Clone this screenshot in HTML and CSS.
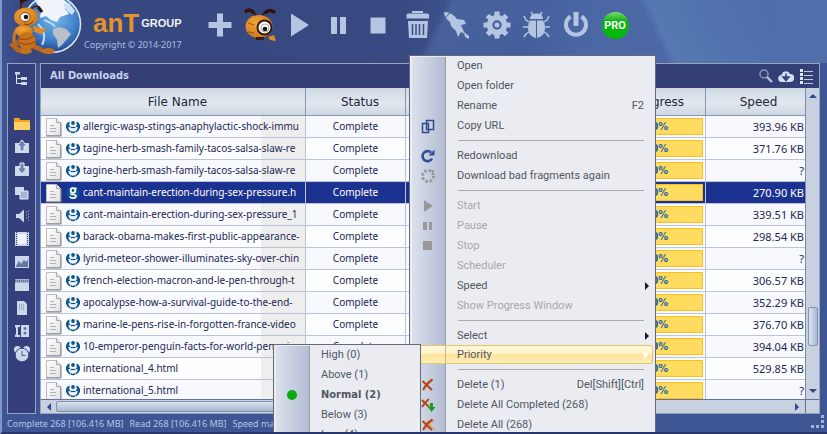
FILE: index.html
```html
<!DOCTYPE html>
<html lang="en">
<head>
<meta charset="utf-8">
<title>Ant Download Manager</title>
<link rel="stylesheet" href="styles.css">
</head>
<body>
<svg class="defs" aria-hidden="true">
  <defs>
    <linearGradient id="paper" x1="0" y1="0" x2="1" y2="1"><stop offset="0" stop-color="#fff"/><stop offset="1" stop-color="#e2e2e2"/></linearGradient>
    <radialGradient id="sea" cx=".55" cy=".4" r=".65"><stop offset="0" stop-color="#78b8ec"/><stop offset=".6" stop-color="#3f7fc8"/><stop offset="1" stop-color="#163a80"/></radialGradient>
    <radialGradient id="amber" cx=".4" cy=".35" r=".7"><stop offset="0" stop-color="#f4a535"/><stop offset="1" stop-color="#c9761a"/></radialGradient>
    <symbol id="doc" viewBox="0 0 17 20">
      <path d="M1.5 1.5H11.5L15.5 5.5V18.5H1.5Z" fill="url(#paper)" stroke="#bcbcbc"/>
      <path d="M1 19H16V6" fill="none" stroke="#828282"/>
      <path d="M11.5 1.5V5.5H15.5" fill="#eee" stroke="#a8a8a8"/>
      <path d="M5 8.5H9M5 11.5H11M5 14.5H11" stroke="#b4b4b4"/>
    </symbol>
    <symbol id="site" viewBox="0 0 14 14">
      <path d="M3.500 1.500V4L2.500 5.500H4V7H2.500V8.500L4 11V12.500L1.500 10.500 0 8V5L1.500 2.500ZM10.500 1.500V4L11.500 5.500H10V7H11.500V8.500L10 11V12.500L12.500 10.500 14 8V5L12.500 2.500Z" fill="#0c5590"/>
      <circle cx="7" cy="3" r="1.900" fill="#0c5590"/>
      <path d="M4.500 7.500H9.500" stroke="#0c5590" stroke-width="1.300"/>
      <path d="M4.500 10.500Q7 13 9.500 10.500V12.500Q7 14 4.500 12.500Z" fill="#0c5590"/>
    </symbol>
    <symbol id="site-on" viewBox="0 0 14 14">
      <circle cx="7" cy="7" r="6.800" fill="#0c5590"/>
      <circle cx="7" cy="4.500" r="2.300" fill="none" stroke="#fff" stroke-width="1.800"/>
      <path d="M9 2.800 10.500 2M5 7.500Q4.500 8.500 7 8.500 10 8.500 10 10.300 9.500 12.200 7 12.200 4 12 4.200 10.300" fill="none" stroke="#fff" stroke-width="1.700"/>
    </symbol>
    <symbol id="cross" viewBox="0 0 16 16"><path d="M2.500 4 12 13M12.500 2.500Q7 6 3 13" fill="none" stroke="#b5481c" stroke-width="2.200"/></symbol>
  </defs>
</svg>

<header class="top">
  <svg class="logo" viewBox="8 0 76 57" role="img" aria-label="Ant and globe">
    <circle cx="52" cy="24" r="28.500" fill="url(#sea)" stroke="#dce8f4" stroke-width="1.500"/>
    <path d="M35 1 46-3 64 0 70 5 65 9 69 14 60 17 57 22 51 20 46 16 40 18 41 9Z" fill="#eef4fa"/>
    <path d="M63 4 69 3 75 11 72 15 67 11Z" fill="#cfe0f0"/>
    <path d="M53 29 59 27 66 29 71 34 67 39 62 45 58 48 57 40 53 34Z" fill="#b9c0c8"/>
    <path d="M38 24Q48 34 42 45M44 20Q54 24 55 27" fill="none" stroke="#b5d9f5" stroke-width="2"/>
    <path d="M21 9Q19 2 27-1M31 9Q38 2 42 12" fill="none" stroke="#48200f" stroke-width="1.800"/>
    <path d="M20 2 27-1M38 7 42 12" stroke="#30140c" stroke-width="3"/>
    <path d="M33 27 43 31 45 28M34 30 42 33" fill="none" stroke="#dc8928" stroke-width="3"/>
    <path d="M18 42 13 45 18 50 26 52M31 45 42 50" fill="none" stroke="#b86520" stroke-width="5"/>
    <ellipse cx="48" cy="51" rx="7" ry="3" fill="#c27120"/>
    <ellipse cx="26" cy="51" rx="6" ry="3" fill="#c27120"/>
    <path d="M20 27Q13 30 14 42" fill="none" stroke="#c87820" stroke-width="3"/>
    <ellipse cx="24" cy="31" rx="9" ry="6" fill="url(#amber)"/>
    <ellipse cx="27" cy="41" rx="9" ry="9" fill="#c6711c"/>
    <path d="M18 38Q25 42 34 36M18 42Q27 47 36 41" fill="none" stroke="#8d4612"/>
    <ellipse cx="26" cy="17" rx="12" ry="9.500" fill="url(#amber)"/>
    <ellipse cx="25" cy="17" rx="5" ry="4.500" fill="#fff" stroke="#80400e"/>
    <circle cx="26" cy="17" r="2.300" fill="#18131a"/>
    <path d="M33 21Q30 26 24 24" fill="none" stroke="#7d3c10"/>
  </svg>
  <div class="brand">
    <h1 class="name"><span class="ant">anT</span><span class="group">GROUP</span></h1>
    <p class="copy">Copyright © 2014-2017</p>
  </div>
  <nav class="toolbar" aria-label="Actions">
    <button aria-label="Add"><svg viewBox="0 0 32 32"><path d="M13 4.500H19V13H27.500V19H19V27.500H13V19H4.500V13H13Z"/></svg></button>
    <button aria-label="Find video"><svg class="big" viewBox="0 0 36 36"><path d="M9 5Q14 6 15 11M26 5Q21 5 20 11" fill="none" stroke="#38180e" stroke-width="2"/><path d="M3 5Q8 1 12 6M23 6Q28 1 33 6" stroke="#30130b" stroke-width="3.500" fill="none"/><ellipse cx="17" cy="19.500" rx="13.500" ry="11.500" fill="url(#amber)"/><path d="M6 16 12 18M6 25 12 26" stroke="#a55212"/><path d="M14 30H22V33H14Z" fill="#371a12"/><circle cx="22.500" cy="20.500" r="7" fill="#fff" stroke="#391812" stroke-width="2"/><circle cx="23" cy="21" r="4" fill="none" stroke="#aaa"/><circle cx="23" cy="22" r="2.300" fill="#17131a"/><path d="M26 30 32 28 34 34 28 33Z" fill="#e08a22"/></svg></button>
    <button aria-label="Start"><svg viewBox="0 0 32 32"><path d="M8 4.500 26 16 8 27.500Z"/></svg></button>
    <button aria-label="Pause"><svg viewBox="0 0 32 32"><path d="M8 8H14V25H8ZM17 8H23V25H17Z"/></svg></button>
    <button aria-label="Stop"><svg viewBox="0 0 32 32"><path d="M8.500 8.500H23.500V24.500H8.500Z"/></svg></button>
    <button aria-label="Delete"><svg viewBox="0 0 32 32"><path d="M10 4V2H21V4M4.500 6Q4.500 4.500 6 4.500H25.500Q27 4.500 27 6V9.500H4.500ZM6 12H26L25 29H7Z"/><path d="M10.500 15V26M14 15V26M17.500 15V26M21.500 15V26" stroke="#3a4c88" stroke-width="1.500"/></svg></button>
    <button aria-label="Boost"><svg viewBox="0 0 32 32"><path d="M3 3Q11 3 16 10L23 11 25 15 20 16 24 25 20 23 17 28 15 22 10 17 9 13Q3 8 3 3ZM23 23 28 27 28 30 24 28Z"/><path d="M4 9 9 4" stroke="#49619d" stroke-width="1"/></svg></button>
    <button aria-label="Settings"><svg viewBox="0 0 32 32"><circle cx="16" cy="16" r="7.500" fill="none" stroke="#b4c5e1" stroke-width="5.500"/><path d="M16 2.500V8M16 24V29.500M2.500 16H8M24 16H29.500M6.500 6.500 10 10M22 22 25.500 25.500M25.500 6.500 22 10M10 22 6.500 25.500" stroke="#b4c5e1" stroke-width="5"/><circle cx="16" cy="16" r="2.500"/></svg></button>
    <button aria-label="Report bug"><svg viewBox="0 0 32 32"><path d="M10 10Q10 4.500 16.500 4.500T23 10Z"/><path d="M11 3 13 6M22 3 20 6M9 13 6 11 4 7M24 13 27 11 29 7M8 18H3M25 18H30M9 23 6 25 4 28M24 23 27 25 29 28" fill="none" stroke="#b4c5e1" stroke-width="1.500"/><path d="M16 11.500V29Q8 27 8 19 8 14 10 11.500ZM17 11.500V29Q25 27 25 19 25 14 23 11.500Z"/></svg></button>
    <button aria-label="Shut down"><svg viewBox="0 0 32 32"><path d="M10.500 7.500A10 10 0 1 0 21.500 7.500" fill="none" stroke="#b4c5e1" stroke-width="4"/><path d="M13.500 3H18.500V17H13.500Z"/></svg></button>
    <button aria-label="Pro" class="pro"><span>PRO</span></button>
  </nav>
</header>

<main class="work">
  <nav class="side" aria-label="Categories">
    <button class="tree" aria-label="Tree"><svg viewBox="0 0 18 18"><path d="M3.500 5V14.500H9M3.500 9.500H9" fill="none" stroke="#dfe7f4"/><path d="M2 3H7V5.500H2ZM8 8H14V11H8ZM8 13H14V16H8Z"/></svg></button>
    <button aria-label="All"><svg viewBox="0 0 18 18"><path d="M1 3H6L7.500 5H17V15H1Z" fill="#f2a51c"/><path d="M1 7H17V15H1Z" fill="#ffd162"/></svg></button>
    <button aria-label="Uploads"><svg viewBox="0 0 18 18"><path d="M2 5H16V15H2Z"/><path d="M9 2 14 8H11V13H7V8H4Z" fill="#6e7fae" stroke="#e6edf8"/></svg></button>
    <button aria-label="Completed"><svg viewBox="0 0 18 18"><path d="M2 5H16V15H2Z"/><path d="M9 13 4 7H7V2H11V7H14Z" fill="#6e7fae" stroke="#e6edf8"/></svg></button>
    <button aria-label="Archives"><svg viewBox="0 0 18 18"><path d="M2 3H11V11H2Z"/><path d="M7 7H15V15H7Z" fill="#a7b5d5" stroke="#e6edf8"/></svg></button>
    <button aria-label="Audio"><svg viewBox="0 0 18 18"><path d="M3 7H6L11 2.500V15.500L6 11H3Z"/><path d="M13 5H14M13 8H14M13 11H14M15 4H16M15 7H16M15 10H16M15 13H16" stroke="#c6d2e8"/></svg></button>
    <button aria-label="Video"><svg viewBox="0 0 18 18"><path d="M2 2H16V16H2Z"/><path d="M3.500 2V16M14.500 2V16" stroke="#3b4985" stroke-dasharray="1 1"/><path d="M5 4H13V14H5Z" fill="#eff4fc"/></svg></button>
    <button aria-label="Images"><svg viewBox="0 0 18 18"><path d="M2 3H16V15H2Z"/><path d="M3 13 6 8 8 11 11 7 13 9 15 6V14H3Z" fill="#6576a7"/></svg></button>
    <button aria-label="Programs"><svg viewBox="0 0 18 18"><path d="M2 3H16V15H2Z"/><path d="M2 5H16" stroke="#66769f" stroke-width="3" stroke-dasharray="1.500 .5"/></svg></button>
    <button aria-label="Documents"><svg viewBox="0 0 18 18"><path d="M4 2H11L14 5V16H4Z"/><path d="M6 6H12M6 8H12M6 10H12" stroke="#7080aa" stroke-dasharray="1 1"/></svg></button>
    <button aria-label="Devices"><svg viewBox="0 0 18 18"><path d="M2 3H7V5H5V13H7V15H2V13L3 12V6L2 5ZM8 3H16V15H8Z"/><circle cx="12" cy="6.500" r="1.500" fill="#60709f"/><circle cx="12" cy="11" r="1.500" fill="#60709f"/></svg></button>
    <button aria-label="Scheduler"><svg viewBox="0 0 18 18"><circle cx="4.500" cy="4.500" r="3.500"/><circle cx="13.500" cy="4.500" r="3.500"/><circle cx="9" cy="10" r="6.800" stroke="#3b4985"/><path d="M9 6V10.500H12.500" fill="none" stroke="#485a92"/></svg></button>
  </nav>

  <section class="panel">
    <div class="bar">
      <h2>All Downloads</h2>
      <button aria-label="Search"><svg viewBox="0 0 16 16"><circle cx="6" cy="6" r="4" fill="none" stroke="#8d9abb" stroke-width="1.500"/><path d="M9 9 14 14" stroke="#b3bfd8" stroke-width="2.400"/></svg></button>
      <button aria-label="Cloud"><svg viewBox="0 0 16 16"><path d="M4 14A3.500 3.500 0 0 1 3.500 7 4.500 4.500 0 0 1 12 6 4 4 0 0 1 12.500 14Z" fill="#d4deee"/><path d="M8 5.500V9H5L8 12.500 11 9H8" fill="#36437f" stroke="#36437f" stroke-width="1.500"/></svg></button>
      <button aria-label="List"><svg viewBox="0 0 16 16"><path d="M2 1H5V4H2ZM2 5H5V8H2ZM2 9H5V12H2ZM2 13H5V16H2Z" fill="#dfe6f2"/><path d="M6 3.500H15M6 7.500H15M6 11.500H15M6 15.500H15" stroke="#c0cce2"/></svg></button>
    </div>
    <div class="view">
      <div class="clip">
        <table>
          <colgroup><col class="c-name"><col class="c-status"><col><col class="c-progress"><col class="c-speed"></colgroup>
          <thead><tr><th>File Name</th><th>Status</th><th></th><th>Progress</th><th>Speed</th></tr></thead>
          <tbody>
            <tr><td><div class="file"><svg class="doc"><use href="#doc"/></svg><svg class="site"><use href="#site"/></svg><span>allergic-wasp-stings-anaphylactic-shock-immu</span></div></td><td>Complete</td><td></td><td><div class="prog">100%</div></td><td>393.96 KB</td></tr>
            <tr><td><div class="file"><svg class="doc"><use href="#doc"/></svg><svg class="site"><use href="#site"/></svg><span>tagine-herb-smash-family-tacos-salsa-slaw-re</span></div></td><td>Complete</td><td></td><td><div class="prog">100%</div></td><td>371.76 KB</td></tr>
            <tr><td><div class="file"><svg class="doc"><use href="#doc"/></svg><svg class="site"><use href="#site"/></svg><span>tagine-herb-smash-family-tacos-salsa-slaw-re</span></div></td><td>Complete</td><td></td><td><div class="prog">100%</div></td><td>?</td></tr>
            <tr class="on"><td><div class="file"><svg class="doc"><use href="#doc"/></svg><svg class="site"><use href="#site-on"/></svg><span>cant-maintain-erection-during-sex-pressure.h</span></div></td><td>Complete</td><td></td><td><div class="prog">100%</div></td><td>270.90 KB</td></tr>
            <tr><td><div class="file"><svg class="doc"><use href="#doc"/></svg><svg class="site"><use href="#site"/></svg><span>cant-maintain-erection-during-sex-pressure_1</span></div></td><td>Complete</td><td></td><td><div class="prog">100%</div></td><td>339.51 KB</td></tr>
            <tr><td><div class="file"><svg class="doc"><use href="#doc"/></svg><svg class="site"><use href="#site"/></svg><span>barack-obama-makes-first-public-appearance-</span></div></td><td>Complete</td><td></td><td><div class="prog">100%</div></td><td>298.54 KB</td></tr>
            <tr><td><div class="file"><svg class="doc"><use href="#doc"/></svg><svg class="site"><use href="#site"/></svg><span>lyrid-meteor-shower-illuminates-sky-over-chin</span></div></td><td>Complete</td><td></td><td><div class="prog">100%</div></td><td>?</td></tr>
            <tr><td><div class="file"><svg class="doc"><use href="#doc"/></svg><svg class="site"><use href="#site"/></svg><span>french-election-macron-and-le-pen-through-t</span></div></td><td>Complete</td><td></td><td><div class="prog">100%</div></td><td>306.57 KB</td></tr>
            <tr><td><div class="file"><svg class="doc"><use href="#doc"/></svg><svg class="site"><use href="#site"/></svg><span>apocalypse-how-a-survival-guide-to-the-end-</span></div></td><td>Complete</td><td></td><td><div class="prog">100%</div></td><td>352.29 KB</td></tr>
            <tr><td><div class="file"><svg class="doc"><use href="#doc"/></svg><svg class="site"><use href="#site"/></svg><span>marine-le-pens-rise-in-forgotten-france-video</span></div></td><td>Complete</td><td></td><td><div class="prog">100%</div></td><td>376.70 KB</td></tr>
            <tr><td><div class="file"><svg class="doc"><use href="#doc"/></svg><svg class="site"><use href="#site"/></svg><span>10-emperor-penguin-facts-for-world-penguin</span></div></td><td>Complete</td><td></td><td><div class="prog">100%</div></td><td>394.04 KB</td></tr>
            <tr><td><div class="file"><svg class="doc"><use href="#doc"/></svg><svg class="site"><use href="#site"/></svg><span>international_4.html</span></div></td><td></td><td></td><td><div class="prog">100%</div></td><td>529.85 KB</td></tr>
            <tr><td><div class="file"><svg class="doc"><use href="#doc"/></svg><svg class="site"><use href="#site"/></svg><span>international_5.html</span></div></td><td></td><td></td><td><div class="prog">100%</div></td><td>?</td></tr>
          </tbody>
        </table>
      </div>
      <div class="vscroll"><i class="up"></i><div class="vtrack"><b></b></div><i class="down"></i></div>
      <div class="hscroll"><i class="left"></i><div class="htrack"><b></b></div><i class="right"></i></div>
      <div class="corner"></div>
    </div>
  </section>
</main>

<footer class="foot"><span>Complete 268 [106.416 MB]</span><span>Read 268 [106.416 MB]</span><span>Speed ma</span>
  <svg class="grip" viewBox="0 0 16 16"><path d="M11 1H14V4H11ZM11 6H14V9H11ZM11 11H14V14H11ZM6 11H9V14H6ZM1 11H4V14H1Z"/></svg>
</footer>

<div class="menu main-menu" role="menu">
  <button role="menuitem">Open</button>
  <button role="menuitem">Open folder</button>
  <button role="menuitem">Rename<kbd>F2</kbd></button>
  <button role="menuitem"><svg viewBox="0 0 16 16"><path d="M6.500 2.500H13.500V11.500H6.500ZM2.500 5.500H8.500V14.500H2.500Z" fill="#ccd3e4" stroke="#334a88" stroke-width="1.500"/></svg>Copy URL</button>
  <hr>
  <button role="menuitem"><svg viewBox="0 0 16 16"><path d="M12 10.500A5 5 0 1 1 11 4.500" fill="none" stroke="#334f98" stroke-width="2.600"/><path d="M14.500 1.500V7.500H8.500Z" fill="#334f98"/></svg>Redownload</button>
  <button role="menuitem"><svg viewBox="0 0 16 16"><circle cx="8" cy="8" r="5.500" fill="none" stroke="#999" stroke-width="3" stroke-dasharray="2.500 1.800"/><path d="M10 2H14V6Z" fill="#999"/></svg>Download bad fragments again</button>
  <hr>
  <button role="menuitem" disabled><svg viewBox="0 0 16 16"><path d="M4 2 13 8 4 14Z"/></svg>Start</button>
  <button role="menuitem" disabled><svg viewBox="0 0 16 16"><path d="M3 4H7V12H3ZM9 4H12V12H9Z"/></svg>Pause</button>
  <button role="menuitem" disabled><svg viewBox="0 0 16 16"><path d="M3 3H12V12H3Z"/></svg>Stop</button>
  <button role="menuitem" disabled>Scheduler</button>
  <button role="menuitem" class="more">Speed</button>
  <button role="menuitem" disabled>Show Progress Window</button>
  <hr>
  <button role="menuitem" class="more">Select</button>
  <button role="menuitem" class="more hot">Priority</button>
  <hr>
  <button role="menuitem"><svg viewBox="0 0 16 16"><use href="#cross"/></svg>Delete (1)<kbd>Del[Shift][Ctrl]</kbd></button>
  <button role="menuitem"><svg viewBox="0 0 16 16"><path d="M2 3 9 10M9 2Q5 5 2 10" fill="none" stroke="#b5481c" stroke-width="2"/><path d="M10 6H13V10H15.500L11.500 15 8 10H10Z" fill="#14a01c"/></svg>Delete All Completed (268)</button>
  <button role="menuitem"><svg viewBox="0 0 16 16"><path d="M6 4 15 13M15 3Q10 6 7 13" fill="none" stroke="#e0b08e" stroke-width="2"/><use href="#cross"/></svg>Delete All (268)</button>
</div>

<div class="menu sub-menu" role="menu">
  <button role="menuitem">High (0)</button>
  <button role="menuitem">Above (1)</button>
  <button role="menuitem" class="current"><svg viewBox="0 0 16 16"><circle cx="8" cy="8" r="5" fill="#08ac0e"/></svg>Normal (2)</button>
  <button role="menuitem">Below (3)</button>
  <button role="menuitem">Low (4)</button>
</div>
</body>
</html>
```
FILE: styles.css
```css
* { box-sizing: border-box; }

body {
  margin: 0;
  height: 100vh;
  overflow: hidden;
  display: flex;
  flex-direction: column;
  position: relative;
  background: #3e5594;
  border-left: 2px solid #8096c4;
  border-bottom: 2px solid #28366e;
  font: 10px/20px "Noto Sans", sans-serif;
  color: #1c2650;
}

button {
  border: 0;
  padding: 0;
  margin: 0;
  background: none;
  font: inherit;
  color: inherit;
}

svg { display: block; flex: none; }
.defs { position: absolute; width: 0; height: 0; }

/* Banner */
.top {
  flex: none;
  height: 63px;
  display: flex;
  padding-left: 6px;
  background:
    linear-gradient(115deg, transparent 52%, rgba(95, 130, 190, .35) 53%, rgba(70, 100, 165, .3) 63%, transparent 64%),
    linear-gradient(65deg, transparent 78%, rgba(100, 145, 195, .4) 79%, rgba(80, 115, 175, .2) 92%),
    linear-gradient(90deg, #3d5292, #37477f 3%, #384981 48%, #4a67a4 70%, #506ea9);
}
.logo { width: 76px; height: 57px; }
.brand { width: 120px; padding-top: 9px; }
.name {
  margin: 0;
  padding-left: 9px;
  height: 29px;
  display: flex;
  align-items: center;
  gap: 2px;
  font: bold 26px/29px "Liberation Sans", sans-serif;
}
.ant { color: #e5942c; }
.group { font-size: 11px; color: #f2f4f8; }
.copy { margin: 0; font-size: 9px; line-height: 14px; color: #a9bee0; }

.toolbar {
  width: 427px;
  height: 50px;
  display: flex;
  justify-content: space-between;
  align-items: center;
}
.toolbar button {
  width: 32px;
  height: 36px;
  display: flex;
  align-items: center;
  justify-content: center;
}
.toolbar svg { width: 32px; height: 32px; fill: #b4c5e1; }
.toolbar .big { width: 36px; height: 36px; }
.pro span {
  width: 27px;
  height: 27px;
  flex: none;
  border-radius: 50%;
  background: linear-gradient(#7ed878, #08b40c 35%, #06b808);
  color: #fff;
  font: bold 11px/28px Roboto, sans-serif;
  text-align: center;
}

/* Work area */
.work { flex: 1; min-height: 0; display: flex; gap: 4px; padding: 0 7px 0 5px; }

.side {
  flex: none;
  width: 29px;
  padding-top: 2px;
  border: 1px solid #98a3c4;
  background: #343f7b;
}
.side button { width: 27px; height: 23px; display: flex; align-items: center; justify-content: center; }
.side .tree { margin-bottom: 23px; }
.side svg { width: 18px; height: 18px; fill: #ccd7ea; }

.panel {
  flex: 1;
  min-width: 0;
  display: flex;
  flex-direction: column;
  border: 1px solid #98a3b8;
}
.bar {
  flex: none;
  height: 24px;
  display: flex;
  align-items: center;
  gap: 4px;
  padding: 0 5px 0 9px;
  background: #343f78;
}
.bar h2 { margin: 0 auto 0 0; font: bold 11px/24px "DejaVu Sans Condensed", sans-serif; color: #c5d3ea; }
.bar svg { width: 16px; height: 16px; }

.view { flex: 1; min-height: 0; display: grid; grid-template: minmax(0, 1fr) 14px / minmax(0, 1fr) 14px; }
.clip { overflow: hidden; background: #f8faff; }

table { width: 100%; table-layout: fixed; border-collapse: separate; border-spacing: 0; }
.c-name { width: 265px; }
.c-status { width: 100px; }
.c-progress { width: 103px; }
.c-speed { width: 99px; }
th {
  height: 28px;
  padding: 0;
  border-right: 1px solid #8496b8;
  border-bottom: 1px solid #8496b8;
  background: linear-gradient(#d0dae4, #e2e8ee 55%, #ced8e2);
  font: 12px/26px "DejaVu Sans", sans-serif;
  color: #22263c;
  padding-left: 9px;
}
th:last-child { padding-left: 6px; border-right: 0; }
td {
  height: 22px;
  padding: 0;
  border-right: 1px solid #b9c4dc;
  border-bottom: 1px solid #b9c4dc;
  line-height: 21px;
  text-align: center;
  white-space: nowrap;
  background: #f7f9ff;
}
tr:nth-child(even) td { background: #fcfeff; }
td:first-child { background: linear-gradient(to left, #eee 44px, #f7f9ff 44px); }
tr:nth-child(even) td:first-child { background: linear-gradient(to left, #eee 44px, #fcfeff 44px); }
td:last-child { text-align: right; padding-right: 1px; border-right: 0; font-size: 11px; }
tbody .on td, tbody .on td:first-child { background: #1c3290; color: #fff; }

.file { height: 21px; display: flex; align-items: center; padding-left: 4px; overflow: hidden; }
.doc { width: 17px; height: 20px; }
.site { width: 14px; height: 14px; margin: 0 3px 0 4px; }
.prog {
  height: 17px;
  margin: 0 2px 0 0;
  border: 1px solid #fcc01c;
  background: #ffdc60;
  font: bold 11px/15px "DejaVu Sans Condensed", sans-serif;
  color: #2d64ac;
}

/* Scroll bars */
.vscroll, .hscroll, .corner { background: #c8d1e0; }
.vscroll { border-left: 1px solid #7888b0; display: flex; flex-direction: column; align-items: center; padding: 6px 0; }
.hscroll { border-top: 1px solid #66719a; display: flex; align-items: center; padding: 0 6px; gap: 5px; }
.corner { border-top: 1px solid #66719a; border-left: 1px solid #66719a; }
.vtrack { flex: 1; width: 10px; display: flex; flex-direction: column; justify-content: flex-end; padding-bottom: 43px; }
.vtrack b { height: 39px; border: 1px solid #8493b7; border-radius: 2px; background: linear-gradient(90deg, #e0e5ef, #a9b7d3); }
.htrack { flex: 1; height: 11px; display: flex; }
.htrack b { width: 70%; border: 1px solid #8290b4; border-radius: 2px; background: linear-gradient(#dbe2ed, #a9b6d2); }
.vscroll i, .hscroll i { border: 4px solid transparent; }
.vscroll .up { border-top-width: 0; border-bottom-color: #33488b; }
.vscroll .down { border-bottom-width: 0; border-top-color: #33488b; }
.hscroll .left { border-left-width: 0; border-right-color: #33488b; }
.hscroll .right { border-right-width: 0; border-left-color: #33488b; }

.foot {
  flex: none;
  height: 18px;
  display: flex;
  gap: 6px;
  padding: 0 1px 0 5px;
  font-size: 9px;
  line-height: 20px;
  color: #b3c5e2;
}
.grip { width: 16px; height: 16px; margin-left: auto; fill: #a2b2d2; }

/* Menus */
.menu {
  position: absolute;
  bottom: -2px;
  overflow: hidden;
  border: solid #666a78;
  border-width: 0 1px;
  background:
    linear-gradient(#666a78, #666a78) 0 0 / 100% 1px no-repeat,
    linear-gradient(90deg, #dce1ec, #c6cedf 50%, #b4bcd4 33px, #9a9da8 33px) 2px 2px / 34px 100% no-repeat,
    #eaecf2;
  color: #505763;
  font: 11px/19px Roboto, sans-serif;
}
.main-menu { left: 407px; top: 55px; width: 247px; }
.sub-menu { left: 271px; top: 344px; width: 148px; }
.menu button {
  width: 100%;
  height: 20px;
  display: flex;
  align-items: center;
  padding: 1px 11px 0 47px;
  white-space: nowrap;
  text-align: left;
}
.menu svg { width: 16px; height: 16px; margin: 0 21px 0 -37px; }
.menu button:disabled { color: #a7a9ae; }
.menu button:disabled svg { fill: #999; }
.menu kbd { margin-left: auto; font: inherit; }
.menu hr { height: 10px; margin: 0 11px 0 48px; border: 0; background: linear-gradient(#a9aaaf, #a9aaaf) 0 5px / 100% 1px no-repeat; }
.menu .more { padding-right: 6px; }
.more::after { content: ""; margin-left: auto; border: 4px solid transparent; border-right: 0; border-left-color: #221a1a; }
.menu .hot {
  width: 243px;
  height: 19px;
  padding-top: 0;
  padding-right: 4px;
  border: 1px solid #e6c468;
  border-left: 0;
  border-radius: 0 3px 3px 0;
  background: linear-gradient(90deg, transparent 35px, #c9b88c 35px, #c9b88c 36px, transparent 36px), linear-gradient(#fff8dc, #fff2c4 45%, #ffe49c 50%, #ffeeb8);
}
.hot::after { border-left-color: #fff; }
.menu .current { font-family: "DejaVu Sans Condensed", sans-serif; font-weight: bold; }
```
